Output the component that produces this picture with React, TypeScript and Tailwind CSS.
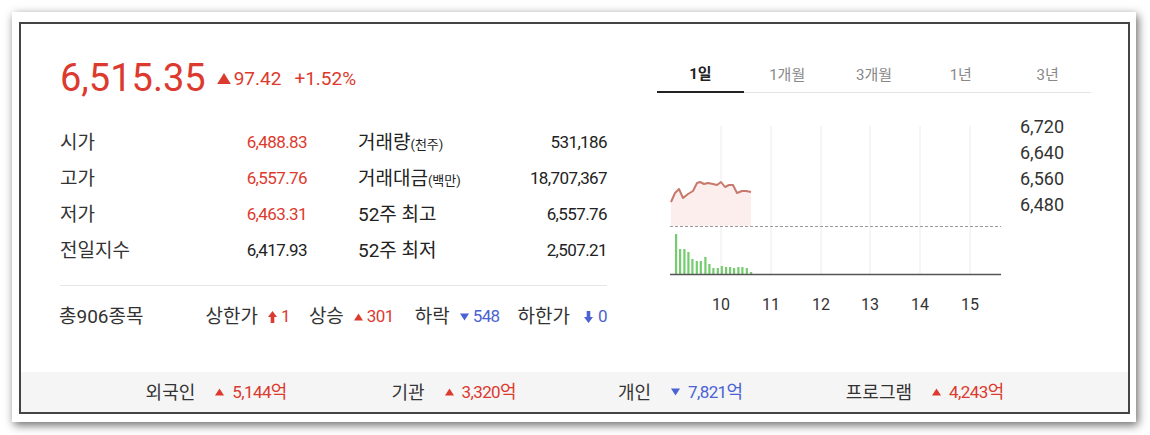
import React from "react";

const RED = "text-[#dc3a2e]";
const BLUE = "text-[#4a62d4]";
const NUM = "text-[17px] tracking-[-0.6px]";

const Up = ({ className = "" }: { className?: string }) => (
  <svg width="10" height="8" viewBox="0 0 10 8" className={className}>
    <path d="M5 0 L10 8 L0 8 Z" fill="currentColor" />
  </svg>
);

const Down = ({ className = "" }: { className?: string }) => (
  <svg width="10" height="8" viewBox="0 0 10 8" className={className}>
    <path d="M0 0 L10 0 L5 8 Z" fill="currentColor" />
  </svg>
);

const ArrowUp = () => (
  <svg width="9" height="12" viewBox="0 0 9 12">
    <path d="M4.5 0 L9 6 L6.3 6 L6.3 12 L2.7 12 L2.7 6 L0 6 Z" fill="currentColor" />
  </svg>
);

const ArrowDown = () => (
  <svg width="9" height="12" viewBox="0 0 9 12">
    <path d="M2.7 0 L6.3 0 L6.3 6 L9 6 L4.5 12 L0 6 L2.7 6 Z" fill="currentColor" />
  </svg>
);

const rows = [
  { l1: "시가", v1: "6,488.83", red: true, l2: "거래량", u2: "(천주)", v2: "531,186" },
  { l1: "고가", v1: "6,557.76", red: true, l2: "거래대금", u2: "(백만)", v2: "18,707,367" },
  { l1: "저가", v1: "6,463.31", red: true, l2: "52주 최고", u2: "", v2: "6,557.76" },
  { l1: "전일지수", v1: "6,417.93", red: false, l2: "52주 최저", u2: "", v2: "2,507.21" },
];

const tabs = ["1일", "1개월", "3개월", "1년", "3년"];

const flows = [
  { label: "외국인", up: true, value: "5,144" },
  { label: "기관", up: true, value: "3,320" },
  { label: "개인", up: false, value: "7,821" },
  { label: "프로그램", up: true, value: "4,243" },
];

// price line points (svg coords)
const line: [number, number][] = [
  [14, 109], [18, 100], [22, 96], [26, 105], [31, 101], [36, 98], [40, 90], [43, 89],
  [47, 91], [51, 90], [56, 91], [60, 92], [64, 89], [68, 94], [72, 92], [76, 92],
  [80, 100], [85, 98], [89, 98], [94, 99],
];

const bars: [number, number][] = [
  [19, 141], [23, 156], [27.3, 156], [31.3, 159], [35.3, 166], [39.7, 168], [43.7, 168],
  [48.3, 164], [52.3, 171], [56.3, 175], [60.7, 175], [64.7, 173], [69, 174], [73, 174],
  [77, 175], [81.3, 174], [85.3, 174], [89.7, 175], [94, 179],
];

const gridX = [64, 114, 164, 213, 263, 313];

const Chart = () => {
  const pts = line.map((p) => p.join(",")).join(" ");
  const area = `M14,133 L${line.map((p) => p.join(",")).join(" L")} L94,133 Z`;
  return (
    <svg width="434" height="227" viewBox="0 0 434 227" className="block">
      {gridX.map((x) => (
        <line key={x} x1={x} x2={x} y1={33} y2={181} stroke="#ececec" strokeWidth="1" />
      ))}
      <path d={area} fill="#fbeeed" />
      <polyline points={pts} fill="none" stroke="#c7796b" strokeWidth="2" strokeLinejoin="round" />
      <line x1={13} x2={344} y1={133.5} y2={133.5} stroke="#9a9a9a" strokeWidth="1" strokeDasharray="3 2" />
      {bars.map(([x, t]) => (
        <rect key={x} x={x - 1} y={t} width={2.2} height={181 - t} fill="#74cc6e" />
      ))}
      <line x1={13} x2={344} y1={181.5} y2={181.5} stroke="#555" strokeWidth="1.3" />
      {gridX.map((x, i) => (
        <text
          key={x}
          x={x}
          y={217}
          textAnchor="middle"
          fontSize="16"
          fill="#333"
          fontFamily="Roboto, sans-serif"
        >
          {10 + i}
        </text>
      ))}
      {["6,720", "6,640", "6,560", "6,480"].map((t, i) => (
        <text key={t} x={363} y={[40, 66, 92, 118][i]} fontSize="18" fill="#333" fontFamily="Roboto, sans-serif">
          {t}
        </text>
      ))}
    </svg>
  );
};

export default function App() {
  return (
    <div className="w-[1150px] h-[435px] bg-white p-[12px] font-['Roboto','Noto_Sans_CJK_KR',sans-serif] text-[#333]">
      <div className="w-[1124px] h-[410px] bg-white shadow-[2px_3px_9px_rgba(0,0,0,0.6)] pt-[10px] pl-[7px] pr-[6px] pb-[8px]">
        <div className="h-full border-2 border-[#444] flex flex-col">
          <div className="h-[348px] flex pl-[39px] pr-[38px] pt-[34px]">
            {/* left */}
            <div className="w-[547px] flex flex-col">
              <div className={`h-[40px] flex items-center ${RED}`}>
                <span className="text-[38px] leading-none">6,515.35</span>
                <Up className="ml-[11px] mr-[3px] w-[14px] h-[11px]" />
                <span className="text-[19px] leading-none">97.42</span>
                <span className="text-[19px] leading-none ml-[13px]">+1.52%</span>
              </div>
              <div className="mt-[27px] flex flex-col">
                {rows.map((r) => (
                  <div key={r.l1} className="h-[36px] flex items-center">
                    <div className="w-[247px] flex justify-between items-center">
                      <span className="text-[19px]">{r.l1}</span>
                      <span className={`${NUM} ${r.red ? RED : "text-[#222]"}`}>{r.v1}</span>
                    </div>
                    <div className="ml-[51px] w-[249px] flex justify-between items-center">
                      <span className="text-[19px] text-[#222]">
                        {r.l2}
                        {r.u2 && <span className="text-[13px]">{r.u2}</span>}
                      </span>
                      <span className={`${NUM} text-[#222]`}>{r.v2}</span>
                    </div>
                  </div>
                ))}
              </div>
              <div className="mt-[16px] border-t border-[#e6e6e6] w-[547px]" />
              <div className="h-[62px] flex items-center justify-between text-[19px]">
                <span className="-ml-[1px]">총906종목</span>
                <div className="flex items-center">
                  <span>상한가</span>
                  <span className={`ml-[10px] mr-[4px] ${RED}`}>
                    <ArrowUp />
                  </span>
                  <span className={`${NUM} ${RED}`}>1</span>
                  <span className="ml-[19px]">상승</span>
                  <Up className={`ml-[10px] mr-[4px] w-[9px] h-[8px] ${RED}`} />
                  <span className={`${NUM} ${RED}`}>301</span>
                  <span className="ml-[21px]">하락</span>
                  <Down className={`ml-[10px] mr-[4px] w-[9px] h-[8px] ${BLUE}`} />
                  <span className={`${NUM} ${BLUE}`}>548</span>
                  <span className="ml-[18px]">하한가</span>
                  <span className={`ml-[14px] mr-[5px] ${BLUE}`}>
                    <ArrowDown />
                  </span>
                  <span className={`${NUM} ${BLUE}`}>0</span>
                </div>
              </div>
            </div>
            {/* right */}
            <div className="ml-[50px] w-[434px] flex flex-col">
              <div className="h-[35px] flex border-b border-[#e4e4e4]">
                {tabs.map((t, i) => (
                  <div
                    key={t}
                    className={
                      i === 0
                        ? "w-[87px] flex items-center justify-center text-[15px] font-bold text-[#222] border-b-2 border-[#222] -mb-[1px]"
                        : "w-[87px] flex items-center justify-center text-[15px] text-[#888]"
                    }
                  >
                    {t}
                  </div>
                ))}
              </div>
              <Chart />
            </div>
          </div>
          <div className="flex-1 bg-[#f5f5f5] grid grid-cols-[237px_238px_215px_274px] pl-[77px] items-center">
            {flows.map((f) => (
              <div key={f.label} className="flex items-center justify-center">
                <span className="text-[18px]">{f.label}</span>
                {f.up ? (
                  <Up className={`ml-[20px] mr-[8px] w-[9px] h-[8px] ${RED}`} />
                ) : (
                  <Down className={`ml-[20px] mr-[8px] w-[9px] h-[8px] ${BLUE}`} />
                )}
                <span className={f.up ? RED : BLUE}>
                  <span className={NUM}>{f.value}</span>
                  <span className="text-[18px]">억</span>
                </span>
              </div>
            ))}
          </div>
        </div>
      </div>
    </div>
  );
}
